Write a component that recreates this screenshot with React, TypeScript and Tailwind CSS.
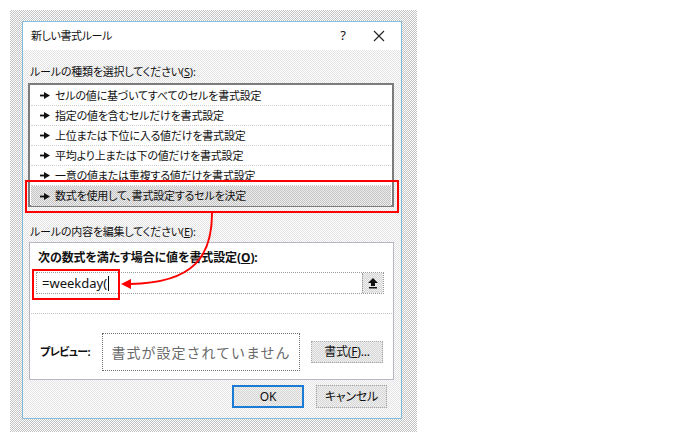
import React from "react";

const jp = "font-['Noto_Sans','Noto_Sans_CJK_JP',sans-serif] [font-feature-settings:'palt']";

function RowArrow() {
  return (
    <svg width="10" height="7" viewBox="0 0 10 7" className="shrink-0">
      <rect x="0" y="2.6" width="5" height="1.8" fill="#111" />
      <polygon points="4,0 10,3.5 4,7" fill="#111" />
    </svg>
  );
}

const rows = [
  "セルの値に基づいてすべてのセルを書式設定",
  "指定の値を含むセルだけを書式設定",
  "上位または下位に入る値だけを書式設定",
  "平均より上または下の値だけを書式設定",
  "一意の値または重複する値だけを書式設定",
  "数式を使用して、書式設定するセルを決定",
];

export default function App() {
  return (
    <div className={`relative w-[698px] h-[440px] bg-white text-[11px] tracking-[-0.2px] text-[#111] ${jp}`}>
      {/* outer dithered shadow frame */}
      <div className="absolute left-[10px] top-[10px] w-[407px] h-[422px] bg-[conic-gradient(#c4c4c4_25%,#ffffff_0_50%,#c4c4c4_0_75%,#ffffff_0)] bg-[length:2px_2px] pl-[12px] pt-[11px]">
        {/* dialog */}
        <div className="w-[380px] h-[398px] border border-[#7fbfdc] flex flex-col bg-[conic-gradient(#e2e2e2_25%,#ffffff_0_50%,#e2e2e2_0_75%,#ffffff_0)] bg-[length:2px_2px]">
          {/* title bar */}
          <div className="h-[28px] bg-white flex items-center pl-[8px] shrink-0">
            <span className="flex-1 text-[11px] tracking-[-0.4px]">新しい書式ルール</span>
            <span className="w-[20px] text-center text-[13px] mr-[20px]">?</span>
            <svg width="12" height="12" viewBox="0 0 12 12" className="mr-[16px]">
              <path d="M1 1 L11 11 M11 1 L1 11" stroke="#222" strokeWidth="1.1" />
            </svg>
          </div>
          {/* body */}
          <div className="flex flex-col px-[5px]">
            <div className="h-[16px] mt-[14px] pl-[2px] leading-[16px]">
              ルールの種類を選択してください(<span className="underline">S</span>):
            </div>
            <div className="mt-[3px] w-[366px] h-[124px] border-2 border-[#7c7c7c] bg-white pt-[1px] pl-[1px] pr-[1px]">
              {rows.map((r, i) => (
                <div
                  key={i}
                  className={`h-[20px] flex items-center gap-[5px] pl-[9px] ${
                    i === 5
                      ? "bg-[conic-gradient(#c4c4c4_25%,#ececec_0_50%,#c4c4c4_0_75%,#ececec_0)] bg-[length:2px_2px]"
                      : "border-b border-dotted border-[#cfcfcf]"
                  }`}
                >
                  <RowArrow />
                  <span className="leading-[16px] whitespace-nowrap">{r}</span>
                </div>
              ))}
            </div>
            <div className="h-[16px] mt-[17px] pl-[2px] leading-[16px]">
              ルールの内容を編集してください(<span className="underline">E</span>):
            </div>
            <div className="mt-[2px] ml-[1px] w-[365px] h-[138px] bg-white border border-[#b8b8c4] flex flex-col">
              <div className="h-[16px] mt-[7px] pl-[8px] leading-[16px] font-bold text-[12px] tracking-[-0.1px]">
                次の数式を満たす場合に値を書式設定(<span className="underline">O</span>):
              </div>
              <div className="mt-[6px] ml-[6px] w-[348px] h-[22px] border border-dotted border-[#9a9a9a] flex items-center bg-white">
                <span className="pl-[5px] flex-1 text-[13px] tracking-normal font-['Noto_Sans',sans-serif] leading-[16px] flex items-center">
                  =weekday(<span className="inline-block w-[1px] h-[15px] bg-black ml-[1px]"></span>
                </span>
                <div className="w-[21px] h-[20px] flex items-center justify-center border-l border-dotted border-[#9a9a9a] bg-[conic-gradient(#d4d4d4_25%,#f2f2f2_0_50%,#d4d4d4_0_75%,#f2f2f2_0)] bg-[length:2px_2px]">
                  <svg width="10" height="11" viewBox="0 0 10 11">
                    <polygon points="5,0 10,5 7,5 7,8 3,8 3,5 0,5" fill="#111" />
                    <rect x="1" y="9" width="8" height="1.5" fill="#111" />
                  </svg>
                </div>
              </div>
              <div className="mt-[19px] ml-[1px] mr-[1px] border-t border-dotted border-[#c4c4c4]"></div>
              <div className="flex items-center mt-[19px]">
                <span className="pl-[10px] w-[72px] font-bold text-[11px] tracking-[-0.6px]">プレビュー:</span>
                <div className="w-[198px] h-[38px] border border-dotted border-[#6f6f6f] flex items-center justify-center text-[14px] tracking-[1px] text-[#6a6a6a] [font-feature-settings:normal]">
                  書式が設定されていません
                </div>
                <button className="ml-[11px] w-[72px] h-[22px] border border-dotted border-[#a8a8a8] bg-[conic-gradient(#d6d6d6_25%,#f0f0f0_0_50%,#d6d6d6_0_75%,#f0f0f0_0)] bg-[length:2px_2px] text-[12px] flex items-center justify-center">
                  書式(<span className="underline">F</span>)...
                </button>
              </div>
            </div>
            <div className="flex mt-[5px] ml-[204px] gap-[12px]">
              <button className="w-[72px] h-[23px] border-2 border-[#1a7ad4] bg-[conic-gradient(#d6d6d6_25%,#f0f0f0_0_50%,#d6d6d6_0_75%,#f0f0f0_0)] bg-[length:2px_2px] text-[12px] flex items-center justify-center font-['Noto_Sans',sans-serif]">
                OK
              </button>
              <button className="w-[71px] h-[23px] border border-dotted border-[#a8a8a8] bg-[conic-gradient(#d6d6d6_25%,#f0f0f0_0_50%,#d6d6d6_0_75%,#f0f0f0_0)] bg-[length:2px_2px] text-[12px] flex items-center justify-center">
                キャンセル
              </button>
            </div>
          </div>
        </div>
      </div>

      {/* red annotation boxes */}
      <div className="absolute left-[25px] top-[180px] w-[374px] h-[33px] border-2 border-[#ff0000]"></div>
      <div className="absolute left-[32px] top-[269px] w-[88px] h-[31px] border-2 border-[#ff0000]"></div>
      <svg className="absolute left-0 top-0" width="698" height="440" viewBox="0 0 698 440">
        <path d="M212 213 C212 255, 195 283, 130 284" fill="none" stroke="#ff0000" strokeWidth="2" />
        <polygon points="121,284 131,279 131,289" fill="#ff0000" />
      </svg>
    </div>
  );
}
